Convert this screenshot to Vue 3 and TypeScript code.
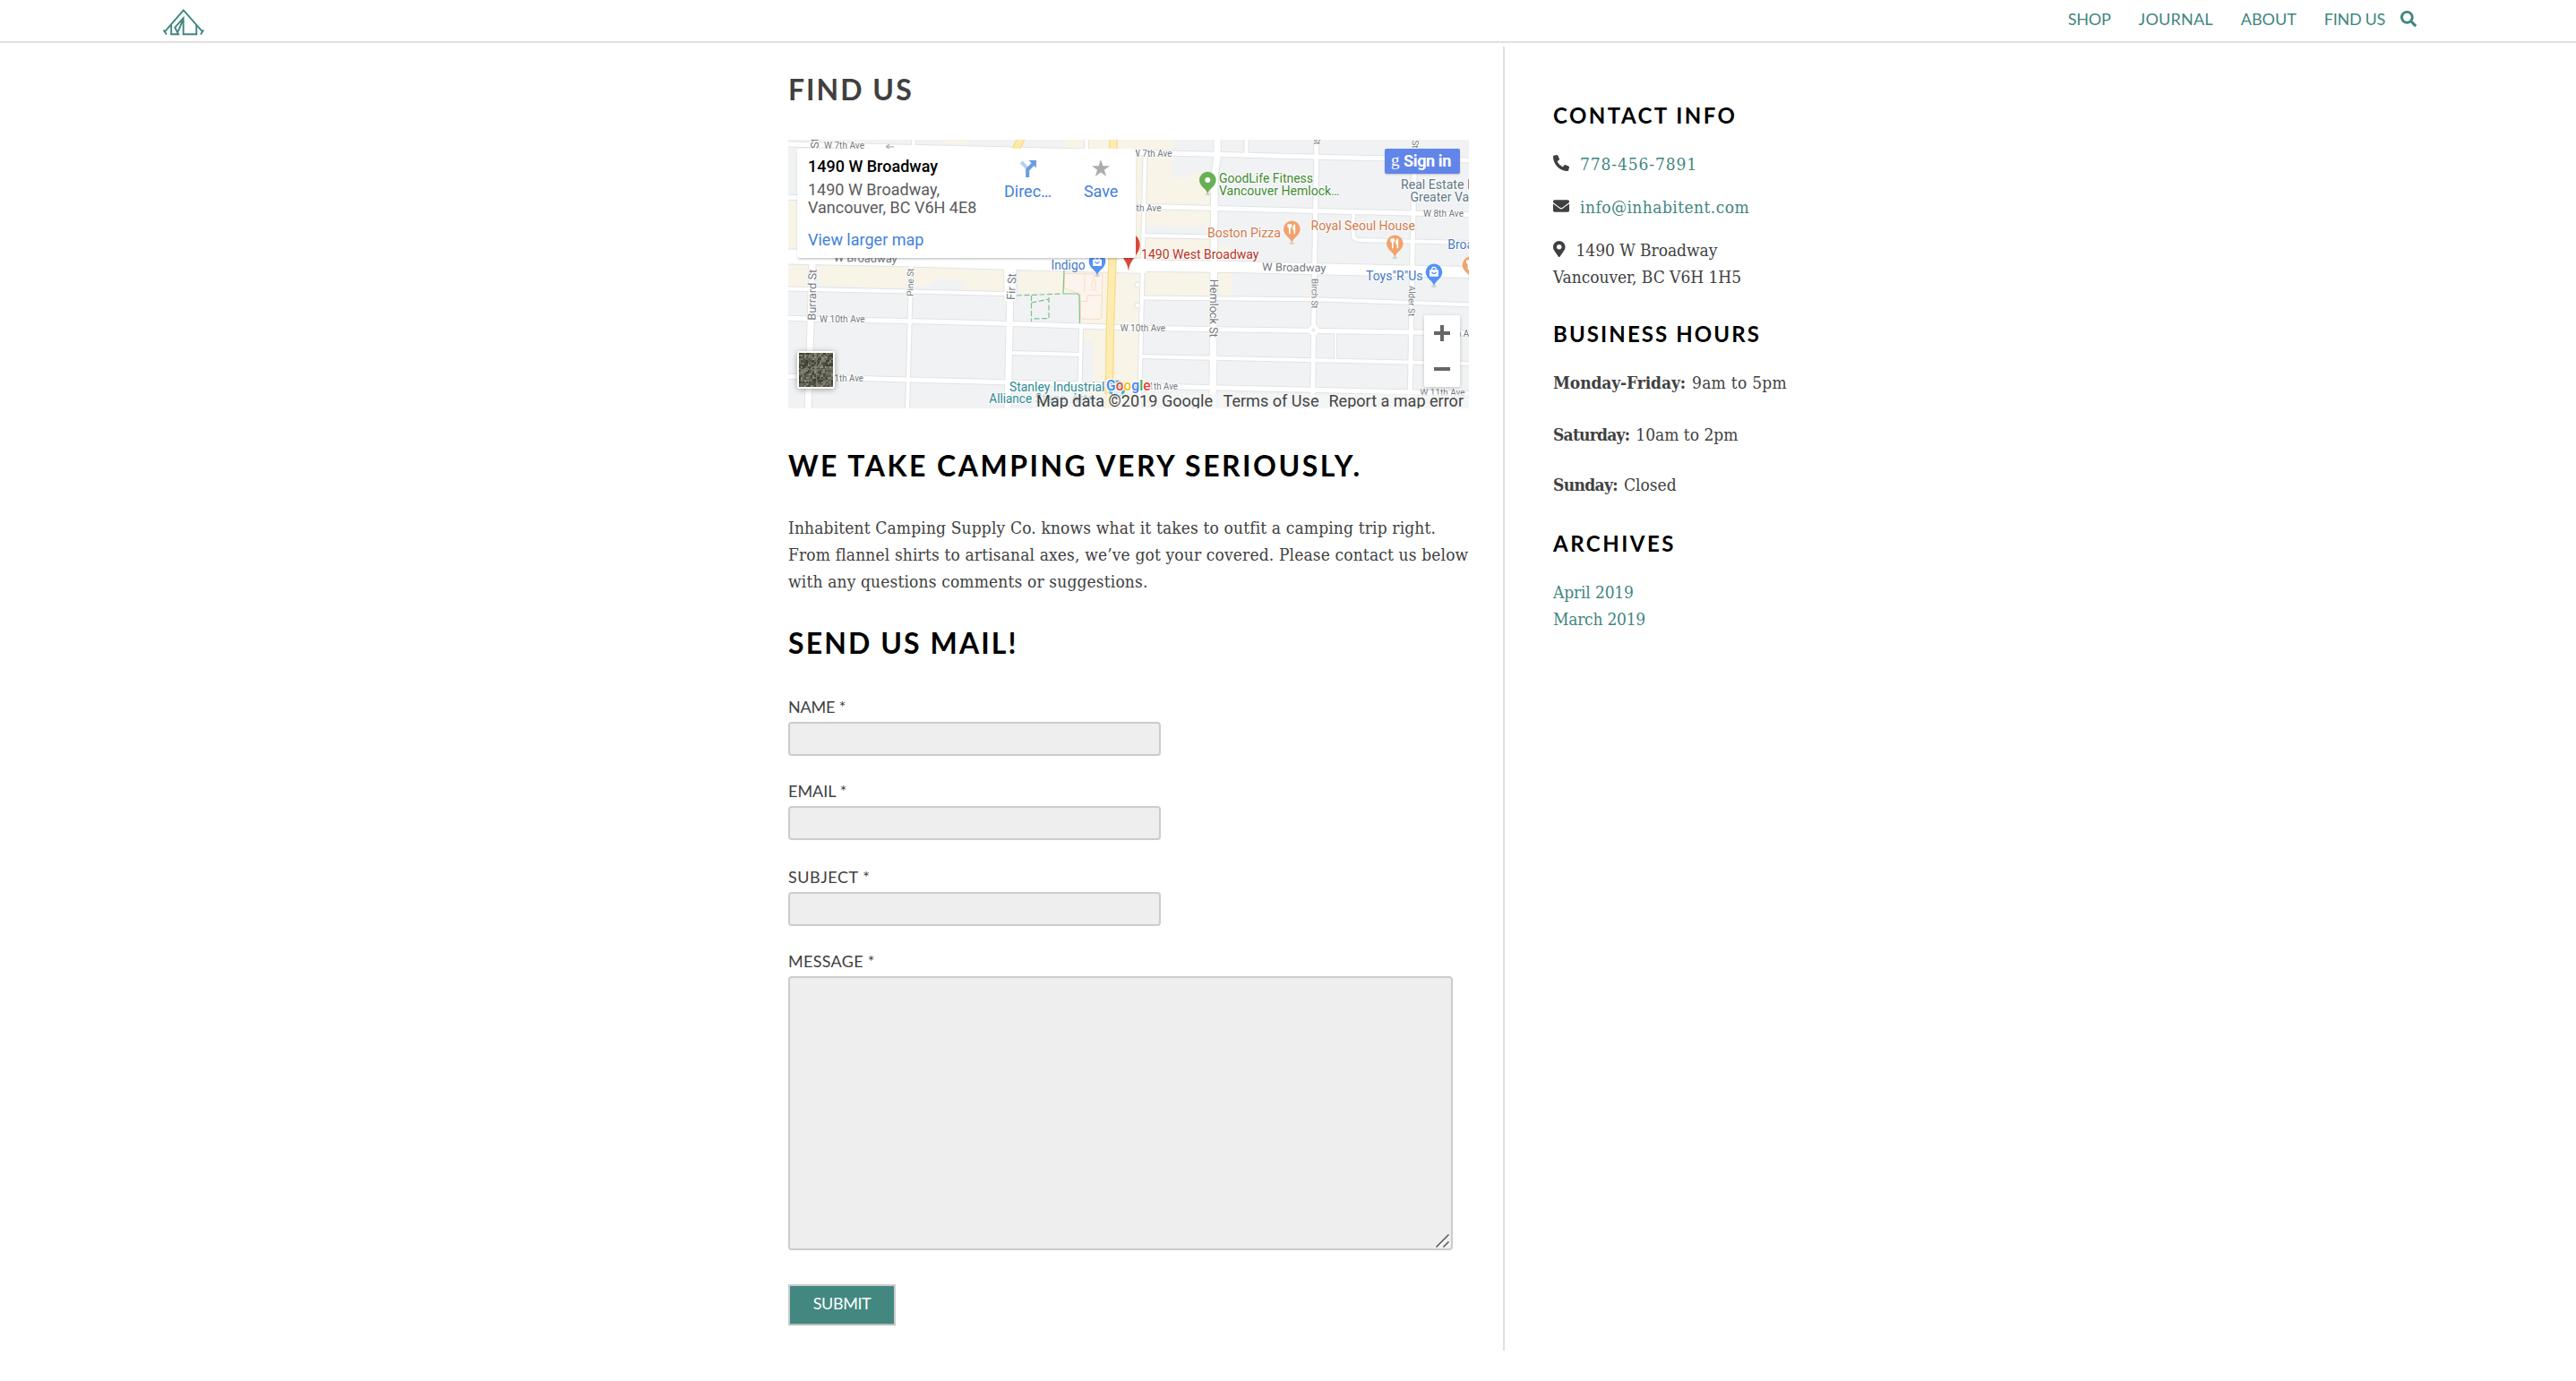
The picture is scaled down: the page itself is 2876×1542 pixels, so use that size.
<script setup lang="ts">
import { ref } from 'vue'

interface NavItem { label: string; spacing: string }
interface Road { d: string; w: number }
interface Label { t: string; x: number; y: number; w: number; s: number; r?: number; c?: string }
interface Poi { x: number; y: number; c: string; kind: 'food' | 'bag' | 'dot' }

const nav: NavItem[] = [
  { label: 'Shop', spacing: '-0.2px' },
  { label: 'Journal', spacing: '0.2px' },
  { label: 'About', spacing: '0' },
  { label: 'Find Us', spacing: '-0.3px' },
]

const fields = ref([
  { id: 'name', label: 'Name *', value: '' },
  { id: 'email', label: 'Email *', value: '' },
  { id: 'subject', label: 'Subject *', value: '' },
])
const message = ref('')

const shops: string[] = [
  'M172 0h29v4h-29z',
  'M309 0h21v9h-21z M334 0h96v11h-96z',
  'M0 69h10v52H0z',
  'M0 140l23 1-2 23H0z',
  'M32 141l20-5 82 4v26l-99-3z',
  'M140 140l100 1v29l-42-1-4-10-25-4-11 8-18 1z',
  'M258 145L365 147L363 206L326 205L325 172L257 171z',
  'M330 212h25v88h-8v-14h-18v-18h11v-44h-10z',
  'M366 0h30v300h-33v-150h5z',
  'M398 16h31v26h18l2-6h24v39h-75z',
  'M398 78h74v18h-16l-8 2-48-3z',
  'M398 111h74v7h22v18h-96z',
  'M397 148l76 1 3 2 19-4v27h-98z',
]

const roads: Road[] = [
  { d: 'M-5 5L765 23.2', w: 5 },
  { d: 'M-5 64L765 84', w: 5 },
  { d: 'M395 107L476 108.5', w: 4 },
  { d: 'M631 82V106Q631 112 638 112L765 115', w: 4 },
  { d: 'M-5 166.3L242 172', w: 4 },
  { d: 'M397 176.5L588 178.3L765 184.3', w: 4 },
  { d: 'M-5 199L258 205.7L400 210.6L765 216', w: 5 },
  { d: 'M250 238L325 240', w: 4 },
  { d: 'M392 242L765 250', w: 4 },
  { d: 'M-5 264L134 268L250 271L400 275L765 283.5', w: 5 },
  { d: 'M30.5 -5L27 140L22 305', w: 7 },
  { d: 'M140 -5V7', w: 4 },
  { d: 'M333 -5V20', w: 4 },
  { d: 'M137.5 130L133 305', w: 4 },
  { d: 'M247.500 130L248 180', w: 13 },
  { d: 'M248 170L245 305', w: 7 },
  { d: 'M327 208L325 305', w: 4 },
  { d: 'M398.5 15L392 305', w: 4 },
  { d: 'M479 -5V20L476 40L474 305', w: 7.5 },
  { d: 'M511.5 -5V15', w: 4 },
  { d: 'M590 -5L586.5 212L585.5 305', w: 5 },
  { d: 'M700 -5L696.5 150L694 305', w: 5 },
  { d: 'M611 215V246', w: 2 },
  { d: 'M-5 130.5L120 133L250 137L400 141', w: 16 },
  { d: 'M380 140.5L500 142L600 144.5L765 148', w: 12 },
]

const streetColor = '#74797e'
const streets: Label[] = [
  { t: 'W 7th Ave', x: 40, y: 10.3, w: 45, s: 10 },
  { t: 'W 7th Ave', x: 384, y: 18.7, w: 44.5, s: 10 },
  { t: 'W 8th Ave', x: 371.5, y: 80, w: 45, s: 10 },
  { t: 'W 8th Ave', x: 709, y: 86.4, w: 45, s: 10 },
  { t: 'W 10th Ave', x: 35, y: 203.8, w: 50.7, s: 10 },
  { t: 'W 10th Ave', x: 370.7, y: 213.8, w: 50.5, s: 10 },
  { t: 'W 10th Ave', x: 720, y: 220, w: 50, s: 10 },
  { t: 'W 11th Ave', x: 35, y: 269.8, w: 49, s: 10 },
  { t: 'W 11th Ave', x: 386, y: 279, w: 49, s: 10 },
  { t: 'W 11th Ave', x: 705.5, y: 286, w: 50, s: 10 },
  { t: 'W Broadway', x: 50.7, y: 136.1, w: 71, s: 12.5, r: 1 },
  { t: 'W Broadway', x: 529, y: 146.3, w: 71.5, s: 12.5, r: 1 },
  { t: 'St', x: 34, y: 10, w: 12, s: 12, r: -90 },
  { t: 'Burrard St', x: 30.5, y: 201.7, w: 57, s: 12.5, r: -89 },
  { t: 'Pine St', x: 139.5, y: 174.7, w: 31, s: 10, r: -89 },
  { t: 'Fir St', x: 253, y: 179, w: 29.5, s: 13, r: -87 },
  { t: 'Hemlock St', x: 471, y: 155.7, w: 65, s: 13, r: 90.5 },
  { t: 'Birch St', x: 584.5, y: 155, w: 33.5, s: 10, r: 90.5 },
  { t: 'Alder St', x: 693, y: 162.7, w: 34.5, s: 10, r: 91 },
  { t: 'St', x: 587, y: -3.5, w: 9, s: 10, r: 90.5 },
  { t: 'St', x: 696.7, y: 0.5, w: 9, s: 10, r: 90.5 },
]

const places: Label[] = [
  { t: 'Indigo', x: 293.5, y: 145, w: 38, s: 14, c: '#4a79c4' },
  { t: '1490 West Broadway', x: 394, y: 133.3, w: 131.5, s: 14, c: '#b93226' },
  { t: 'GoodLife Fitness', x: 481, y: 48, w: 105, s: 14, c: '#3f8b30' },
  { t: 'Vancouver Hemlock…', x: 481, y: 61.7, w: 134.5, s: 14, c: '#3f8b30' },
  { t: 'Boston Pizza', x: 468, y: 109.2, w: 82, s: 14, c: '#d07a4c' },
  { t: 'Royal Seoul House', x: 583.5, y: 101.3, w: 116.5, s: 14, c: '#d07a4c' },
  { t: 'Toys"R"Us', x: 645, y: 157, w: 63.5, s: 14, c: '#4a79c4' },
  { t: 'Broadway', x: 736.3, y: 122.3, w: 61, s: 14, c: '#4a79c4' },
  { t: 'Real Estate Board', x: 684, y: 54.7, w: 111, s: 14, c: '#607884' },
  { t: 'Greater Vancouver', x: 694.6, y: 68.7, w: 115, s: 14, c: '#607884' },
  { t: 'Stanley Industrial', x: 247, y: 280.5, w: 106.5, s: 14, c: '#2e8a93' },
  { t: 'Alliance Stage, Arts…', x: 224.3, y: 294.3, w: 126, s: 14, c: '#2e8a93' },
]

const pois: Poi[] = [
  { x: 345, y: 136, c: '#5491f5', kind: 'bag' },
  { x: 468.3, y: 45, c: '#67b055', kind: 'dot' },
  { x: 562.3, y: 99.7, c: '#f2a26c', kind: 'food' },
  { x: 677.3, y: 115.7, c: '#f2a26c', kind: 'food' },
  { x: 721, y: 147.7, c: '#5491f5', kind: 'bag' },
  { x: 762, y: 139.7, c: '#f2a26c', kind: 'food' },
]

// Aerial thumbnail: a small pseudo-random mosaic of rooftops and trees
const tones = ['#4b4e41', '#66675a', '#7c7a6b', '#3a3e34', '#8d897a', '#56584a', '#6e6d5e', '#434739']
let seed = 17
const next = () => (seed = (seed * 16807) % 2147483647)
const mosaic = Array.from({ length: 400 }, (_, i) => ({
  x: (i % 20) * 2,
  y: Math.floor(i / 20) * 2,
  c: tones[next() % tones.length],
}))
</script>

<template>
  <div class="page">
    <header class="bar">
      <svg class="logo" width="46" height="32" viewBox="0 0 46 32">
        <g fill="none" stroke="#3f867f" stroke-width="1.9">
          <path d="M1.8 25.6L22.9 1.4L44.2 25.6M.6 23.4L4 28.6M45.3 23.4L42 28.6" />
          <path d="M9.2 17.6V28.2H17.2L13.3 20.6L22.7 10.2V28.2H37.3V18M22.7 10.8L16.8 25.4" />
        </g>
      </svg>
      <nav class="nav">
        <a v-for="n in nav" :key="n.label" :style="{ letterSpacing: n.spacing }">{{ n.label }}</a>
        <svg class="search" width="18" height="18" viewBox="0 0 512 512">
          <path fill="currentColor" d="M505 442.7L405.3 343c-4.5-4.5-10.6-7-17-7H372c27.6-35.3 44-79.7 44-128C416 93.1 322.9 0 208 0S0 93.1 0 208s93.1 208 208 208c48.3 0 92.7-16.4 128-44v16.3c0 6.4 2.5 12.5 7 17l99.7 99.7c9.4 9.4 24.6 9.4 33.9 0l28.3-28.3c9.4-9.4 9.4-24.6.1-34zM208 336c-70.7 0-128-57.2-128-128 0-70.7 57.2-128 128-128 70.7 0 128 57.2 128 128 0 70.7-57.2 128-128 128z" />
        </svg>
      </nav>
    </header>

    <div class="content">
      <main class="main">
        <h1>Find Us</h1>

        <section class="map">
          <svg width="760" height="300" viewBox="0 0 760 300">
            <rect width="760" height="300" fill="#f1f2f4" />
            <path v-for="d in shops" :key="d" :d="d" fill="#f8f4e7" />
            <g fill="none" stroke="#e2e3e4">
              <path v-for="r in roads" :key="r.d" :d="r.d" :stroke-width="r.w + 2" />
            </g>
            <circle cx="586.5" cy="212.7" r="6.5" fill="#fff" stroke="#e2e3e4" />
            <g fill="none" stroke="#fff">
              <path v-for="r in roads" :key="r.d" :d="r.d" :stroke-width="r.w" />
            </g>
            <circle cx="586.5" cy="212.7" r="6" fill="#fff" />
            <circle cx="586.5" cy="212.7" r="1.6" fill="#f1f2f4" stroke="#dcddde" stroke-width=".7" />
            <path d="M392 160a3 3 0 1 0 0 4M392 183a3 3 0 1 0 0 4" fill="#fff" stroke="#dcdcdc" />

            <g fill="#fdf4ee" stroke="#fbdcc6">
              <path d="M308.500 149.500L350.500 150V173.500L334 174V180.500H326V172L308.500 166Z" />
              <path d="M331 149V170M341 150V157" fill="none" />
              <path d="M326.500 180.500H334V174L350.500 173.500L349.500 199Q349.500 200.500 347 200.500L326.500 200Z" />
              <rect x="339" y="157" width="4" height="11" rx="1.500" />
            </g>
            <g fill="none" stroke="#7fc08a" stroke-width="1.200">
              <path d="M308 146L307 172H322Q325 172 325 175L325.500 205" />
              <path stroke-dasharray="6 2.500" d="M255 174L306 172M271.500 174V203M271.500 182L291 178M291 176V199.500L272 200" />
            </g>

            <path d="M254 11L261 -3" stroke="#f5d88a" stroke-width="9" fill="none" />
            <path d="M254 11L261 -3" stroke="#ffe9a5" stroke-width="7" fill="none" />
            <path d="M363 -5L362.500 120L359.500 205L358 305" stroke="#f6da8e" stroke-width="9.500" fill="none" />
            <path d="M363 -5L362.500 120L359.500 205L358 305" stroke="#ffecb0" stroke-width="7" fill="none" />
            <path d="M110 7.800h8M113 5.300l-3.500 2.500l3.500 2.500" stroke="#a9afb6" fill="none" stroke-width="1.300" />

            <g :fill="streetColor" class="halo">
              <text v-for="(l, i) in streets" :key="i" :x="l.x" :y="l.y" :font-size="l.s" :textLength="l.w" lengthAdjust="spacingAndGlyphs" :transform="`rotate(${l.r ?? 0} ${l.x} ${l.y})`">{{ l.t }}</text>
            </g>

            <g v-for="(p, i) in pois" :key="i" :transform="`translate(${p.x} ${p.y})`">
              <ellipse cy="16" rx="3" ry="1.300" fill="#000" opacity=".13" />
              <path d="M0 16C-.8 9.500 -9.300 7.500 -9.300 0A9.300 9.300 0 0 1 9.300 0C9.300 7.500 .8 9.500 0 16Z" :fill="p.c" />
              <circle v-if="p.kind === 'dot'" r="3" fill="#fff" />
              <g v-else-if="p.kind === 'food'" stroke="#fff" fill="#fff">
                <path d="M-2.500 -4.500V5.500M3 -5V5.500" stroke-width="1.700" fill="none" />
                <path d="M-4.500 -5H-.5V-2Q-2.500 .5 -4.500 -2ZM3 -5Q1 -4 1.300 .5H3Z" stroke-width=".8" />
              </g>
              <g v-else>
                <rect x="-5" y="-2.500" width="10" height="7.500" rx="1" fill="#fff" />
                <path d="M-2.300 -2.500V-4Q0 -6.500 2.300 -4V-2.500" stroke="#fff" stroke-width="1.300" fill="none" />
                <path d="M-2.500 0Q0 4 2.500 0" :stroke="p.c" stroke-width="1.300" fill="none" />
              </g>
            </g>

            <path d="M380 147C379 133 367.300 129 367.300 117A12.700 12.700 0 0 1 392.700 117C392.700 129 381 133 380 147Z" fill="#da4a3c" />

            <circle cx="367" cy="278" r="9.500" fill="#4fb3c0" />
            <path d="M362 280q5 -4 10 0v4q-5 4 -10 0z" fill="#fff" opacity=".8" />

            <g class="halo">
              <text v-for="(l, i) in places" :key="i" :x="l.x" :y="l.y" :font-size="l.s" :fill="l.c" :textLength="l.w" lengthAdjust="spacingAndGlyphs">{{ l.t }}</text>
            </g>
            <text class="google halo" x="355" y="279.500" font-size="17" textLength="49.500" lengthAdjust="spacingAndGlyphs"><tspan fill="#4285f4">G</tspan><tspan fill="#ea4335">o</tspan><tspan fill="#fbbc05">o</tspan><tspan fill="#4285f4">g</tspan><tspan fill="#34a853">l</tspan><tspan fill="#ea4335">e</tspan></text>

            <rect x="272" y="284" width="488" height="16" fill="#f5f5f5" opacity=".72" />
            <g fill="#444" font-size="18">
              <text x="277" y="298" textLength="197" lengthAdjust="spacingAndGlyphs">Map data ©2019 Google</text>
              <text x="485.500" y="298" textLength="107" lengthAdjust="spacingAndGlyphs">Terms of Use</text>
              <text x="603.500" y="298" textLength="150.500" lengthAdjust="spacingAndGlyphs">Report a map error</text>
            </g>
          </svg>

          <div class="card">
            <div class="place">
              <strong>1490 W Broadway</strong>
              <span class="addr1">1490 W Broadway,</span>
              <span class="addr2">Vancouver, BC V6H 4E8</span>
              <a>View larger map</a>
            </div>
            <div class="action">
              <svg width="20" height="20" viewBox="0 0 20 20">
                <path d="M2.200 2.800L9 10" stroke="#b5cff3" stroke-width="4" />
                <path d="M9.200 20V11.500L16 4.500" stroke="#6a9ce2" stroke-width="4" fill="none" />
                <path d="M10.500 1H19V9.500Z" fill="#6a9ce2" />
              </svg>
              <a>Direc…</a>
            </div>
            <div class="action save">
              <svg width="20" height="20" viewBox="0 0 20 20">
                <path fill="#adadad" d="M10 0L12.400 7.200H20L13.900 11.700L16.200 19L10 14.500L3.800 19L6.100 11.700L0 7.200H7.600Z" />
              </svg>
              <a>Save</a>
            </div>
          </div>

          <div class="signin"><i>g</i>Sign in</div>

          <div class="zoom">
            <svg width="40" height="80" viewBox="0 0 40 80">
              <path d="M11 20H29M20 11V29M11 60H29" stroke="#666" stroke-width="4" />
            </svg>
          </div>

          <div class="aerial">
            <svg width="38" height="38" viewBox="0 0 40 40" shape-rendering="crispEdges">
              <rect v-for="(m, i) in mosaic" :key="i" :x="m.x" :y="m.y" width="2" height="2" :fill="m.c" />
              <path d="M0 19.500H40M20 0V40" stroke="#77766a" />
            </svg>
          </div>
        </section>

        <h2 class="camp">We take camping very seriously.</h2>
        <p class="intro">
          Inhabitent Camping Supply Co. knows what it takes to outfit a camping trip right.<br />
          From flannel shirts to artisanal axes, we’ve got your covered. Please contact us below<br />
          with any questions comments or suggestions.
        </p>

        <h2 class="mail">Send us mail!</h2>
        <form @submit.prevent>
          <div v-for="f in fields" :key="f.id" class="field" :class="f.id">
            <label :for="f.id">{{ f.label }}</label>
            <input :id="f.id" v-model="f.value" type="text" />
          </div>
          <div class="field message">
            <label for="message">Message *</label>
            <div class="area">
              <textarea id="message" v-model="message"></textarea>
              <svg class="grip" width="18" height="18" viewBox="0 0 18 18">
                <path d="M3 17.500L17 3.500M11 17.500L17 11.500" stroke="#fafafa" stroke-width="2" />
                <path d="M1.500 16.500L15.500 2.500M9.500 16.500L15.500 10.500" stroke="#555" stroke-width="1.500" />
              </svg>
            </div>
          </div>
          <button type="submit">Submit</button>
        </form>
      </main>

      <aside class="side">
        <h3>Contact Info</h3>
        <div class="line first">
          <svg width="18" height="18" viewBox="0 0 512 512"><path fill="#404040" d="M497.390 361.800l-112-48a24 24 0 0 0-28 6.900l-49.600 60.600A370.660 370.660 0 0 1 130.600 204.110l60.600-49.600a23.940 23.940 0 0 0 6.900-28l-48-112A24.160 24.160 0 0 0 122.600.610l-104 24A24 24 0 0 0 0 48c0 256.500 207.900 464 464 464a24 24 0 0 0 23.400-18.600l24-104a24.290 24.290 0 0 0-14.010-27.600z" /></svg>
          <a class="phone">778-456-7891</a>
        </div>
        <div class="line">
          <svg width="18" height="18" viewBox="0 0 512 512"><path fill="#404040" d="M502.300 190.800c3.900-3.100 9.700-.2 9.700 4.700V400c0 26.500-21.500 48-48 48H48c-26.500 0-48-21.500-48-48V195.600c0-5 5.700-7.800 9.700-4.700 22.400 17.400 52.100 39.500 154.100 113.600 21.100 15.400 56.700 47.800 92.200 47.600 35.700.3 72-32.800 92.300-47.600 102-74.100 131.600-96.300 154-113.700zM256 320c23.200.4 56.600-29.200 73.400-41.400 132.700-96.300 142.800-104.700 173.400-128.700 5.800-4.500 9.200-11.500 9.200-18.900v-19c0-26.500-21.500-48-48-48H48c-26.500 0-48 21.500-48 48v19c0 7.400 3.400 14.300 9.200 18.900 30.600 23.900 40.700 32.400 173.400 128.700 16.800 12.200 50.200 41.800 73.400 41.400z" /></svg>
          <a class="mailto">info@inhabitent.com</a>
        </div>
        <div class="line">
          <svg width="13.500" height="18" viewBox="0 0 384 512"><path fill="#404040" d="M172.268 501.670C26.970 291.031 0 269.413 0 192 0 85.961 85.961 0 192 0s192 85.961 192 192c0 77.413-26.970 99.031-172.268 309.670-9.535 13.774-29.930 13.773-39.464 0zM192 272c44.183 0 80-35.817 80-80s-35.817-80-80-80-80 35.817-80 80 35.817 80 80 80z" /></svg>
          <span class="street">1490 W Broadway</span>
        </div>
        <div class="city">Vancouver, BC V6H 1H5</div>

        <h3 class="hours">Business Hours</h3>
        <div class="slot mf"><b>Monday-Friday:</b><span>9am to 5pm</span></div>
        <div class="slot sat"><b>Saturday:</b><span>10am to 2pm</span></div>
        <div class="slot sun"><b>Sunday:</b><span>Closed</span></div>

        <h3 class="archives">Archives</h3>
        <a class="month april">April 2019</a>
        <a class="month march">March 2019</a>
      </aside>
    </div>
  </div>
</template>

<style>
body { background: #fff; }
</style>

<style scoped>
.page { min-height: 1542px; color: #404040; font: 19px/30px "DejaVu Serif Condensed", "DejaVu Serif", serif; }
.page * { box-sizing: border-box; }
svg { display: block; flex: none; }
a { color: #3f867f; text-decoration: none; }

.bar { height: 48px; padding: 0 178px 0 182px; display: flex; justify-content: space-between; border-bottom: 2px solid #e1e1e1; }
.logo { margin-top: 10px; }
.nav { display: flex; gap: 31px; color: #3f867f; font: 18px/24px Lato, sans-serif; text-transform: uppercase; padding-top: 9px; }
.nav a { white-space: nowrap; }
.search { margin: 3px 0 0 -14px; }

.content { display: flex; padding-left: 880px; }
.main { width: 760px; margin-right: 38px; height: 1460px; }
.side { margin-top: 4px; border-left: 2px solid #e1e1e1; padding: 61px 0 0 54px; height: 1456px; }

h1, h2, h3 { margin: 0; font-family: Lato, sans-serif; font-weight: 700; text-transform: uppercase; white-space: nowrap; }
h1, h2 { font-size: 32px; line-height: 40px; }
h1 { margin-top: 32px; letter-spacing: 2px; color: #404040; }
h2, h3 { color: #000; }
.camp { margin-top: 44px; letter-spacing: 2.49px; }
.mail { margin-top: 34px; letter-spacing: 2.1px; }
.intro { margin: 34px 0 0; letter-spacing: 0.15px; white-space: nowrap; }

.map { position: relative; margin-top: 36px; width: 760px; height: 300px; overflow: hidden; font-family: Roboto, sans-serif; }
.halo { paint-order: stroke; stroke: rgba(255, 255, 255, 0.85); stroke-width: 2px; stroke-linejoin: round; }
.google { font-weight: 500; stroke-width: 3px; }
.card { position: absolute; left: 10px; top: 10px; width: 378px; height: 122px; padding: 10px 0 0 12px; background: #fff; border-radius: 3px; box-shadow: 0 2px 3px -1px rgba(0, 0, 0, 0.3); display: flex; font-size: 18px; line-height: 20px; color: #5b5b5b; white-space: nowrap; }
.card a { color: #4281dd; }
.place { display: flex; flex-direction: column; width: 213px; }
.place strong { color: #000; font-weight: 500; letter-spacing: 0; margin-bottom: 6px; }
.addr2 { margin-bottom: 16px; }
.action { width: 80px; display: flex; flex-direction: column; align-items: center; gap: 6px; padding-top: 2px; }
.save { margin-left: 4px; }
.signin { position: absolute; left: 666px; top: 10px; width: 84px; height: 28px; background: #6285e9; border-radius: 2px; box-shadow: 0 1px 2px rgba(0, 0, 0, 0.2); color: #fff; font-size: 18px; font-weight: 700; line-height: 28px; padding-left: 7px; letter-spacing: -0.4px; display: flex; gap: 5px; white-space: nowrap; }
.signin i { font: 400 19px/26px "Liberation Serif", serif; }
.zoom { position: absolute; left: 710px; top: 196px; width: 40px; height: 80px; background: #fff; border-radius: 2px; box-shadow: 0 1px 4px rgba(0, 0, 0, 0.2); }
.aerial { position: absolute; left: 10px; top: 236px; width: 42px; height: 42px; border: 2px solid #fff; border-radius: 3px; box-shadow: 0 1px 6px rgba(0, 0, 0, 0.35); }

.field { display: flex; flex-direction: column; }
.name { margin-top: 39px; }
.email, .message { margin-top: 27px; }
.subject { margin-top: 29px; }
label { font: 18px/24px Lato, sans-serif; text-transform: uppercase; margin-bottom: 5px; }
.name label { letter-spacing: -0.2px; }
.email label { letter-spacing: 0; }
.subject label { letter-spacing: 0.55px; }
.message label { letter-spacing: 0.3px; }
input, textarea { display: block; margin: 0; background: #eee; border: 2px solid #ccc; border-radius: 4px; outline: none; }
input { width: 416px; height: 38px; }
.area { position: relative; width: 742px; height: 306px; }
textarea { width: 742px; height: 306px; resize: none; }
.grip { position: absolute; right: 2px; bottom: 2px; }
button { display: block; margin: 38px 0 0; width: 120px; height: 46px; padding: 0 0 4px; background: #438880; border: 2px solid #ccc; border-bottom-color: #bbb; color: #fff; font: 18px/24px Lato, sans-serif; letter-spacing: -0.4px; text-transform: uppercase; }

h3 { font-size: 24px; line-height: 32px; letter-spacing: 2.45px; }
.line { display: flex; height: 30px; margin-top: 18px; gap: 12px; }
.line svg { margin-top: 5px; }
.first { margin-top: 23px; }
.phone { letter-spacing: 0.9px; }
.mailto { letter-spacing: 0.45px; }
.street, .city { letter-spacing: -0.05px; }
.hours { margin-top: 33px; letter-spacing: 2.1px; }
.slot { display: flex; gap: 7px; white-space: nowrap; }
.mf { margin-top: 23px; }
.mf b { letter-spacing: -0.1px; }
.mf span { letter-spacing: 0.27px; }
.sat { margin-top: 28px; }
.sat b { letter-spacing: -0.75px; }
.sun { margin-top: 26px; }
.sun b { letter-spacing: -0.64px; }
.archives { margin-top: 35px; letter-spacing: 2.5px; }
.month { display: block; }
.april { margin-top: 23px; letter-spacing: -0.15px; }
.march { letter-spacing: -0.25px; }
</style>
